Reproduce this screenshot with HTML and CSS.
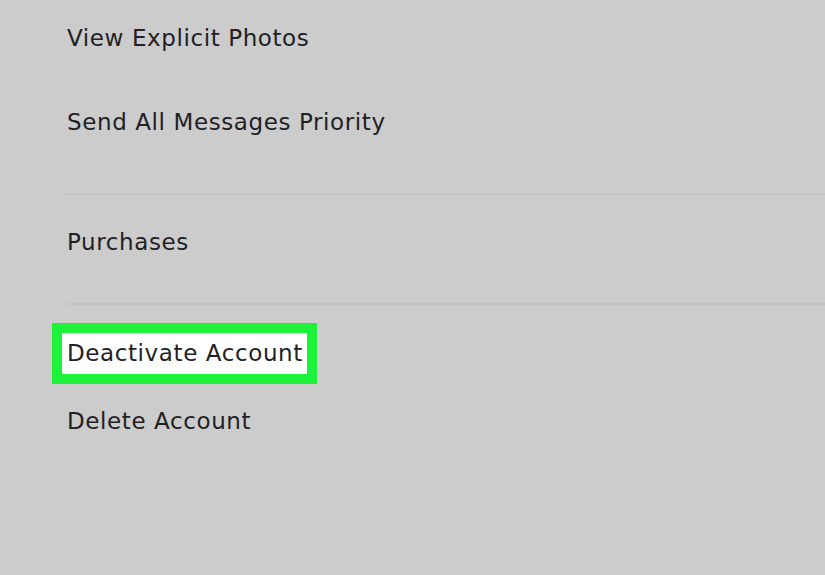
FILE: index.html
```html
<!DOCTYPE html>
<html>
<head>
<meta charset="utf-8">
<link rel="stylesheet" href="styles.css">
</head>
<body>
<div class="menu">
  <div class="item first">View Explicit Photos</div>
  <div class="item second">Send All Messages Priority</div>
  <div class="divider d1"></div>
  <div class="item purchases">Purchases</div>
  <div class="divider d2"></div>
  <div class="item highlight">Deactivate Account</div>
  <div class="item delete">Delete Account</div>
</div>
</body>
</html>
```
FILE: styles.css
```css
html, body {
  margin: 0;
  padding: 0;
  background: #cccccc;
}
body {
  width: 825px;
  height: 575px;
  overflow: hidden;
  font-family: "DejaVu Sans", sans-serif;
  color: #1f2125;
}
.menu {
  padding-left: 67px;
  display: flex;
  flex-direction: column;
  align-items: flex-start;
}
.item {
  font-size: 23px;
  letter-spacing: 0.6px;
  line-height: 30px;
  height: 30px;
  white-space: nowrap;
}
.first { margin-top: 23px; }
.second { margin-top: 54px; }
.divider {
  align-self: stretch;
  height: 2px;
  background: #c5c5c5;
  margin-left: -1px;
}
.d1 { margin-top: 56px; }
.purchases { margin-top: 32px; }
.d2 { margin-top: 46px; }
.highlight {
  margin-top: 18px;
  margin-left: -15px;
  border: 10px solid #1ef23a;
  background: #ffffff;
  padding: 0 4px 0 5px;
  height: 41px;
  line-height: 41px;
}
.delete { margin-top: 22px; }
```
